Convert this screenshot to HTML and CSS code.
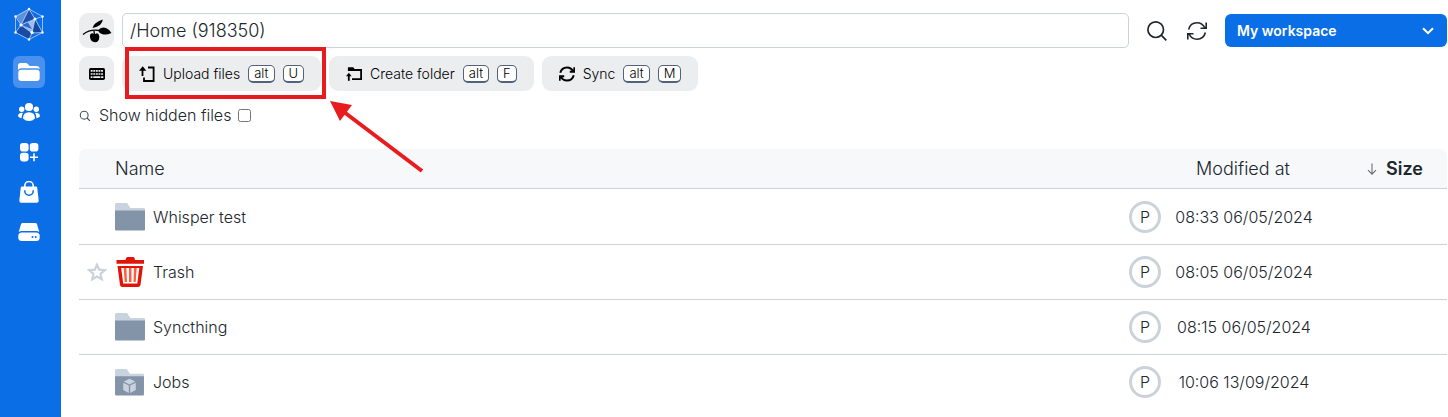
FILE: index.html
```html
<!DOCTYPE html>
<html lang="en">
<head>
<meta charset="utf-8">
<title>Files</title>
<meta name="viewport" content="width=device-width, initial-scale=1">
<link rel="stylesheet" href="styles.css">
</head>
<body>
<svg class="defs" aria-hidden="true">
  <symbol id="folder" viewBox="0 0 30 28">
    <path fill="#c9d3df" d="M0 1.5Q0 0 1.500 0H12L15.500 5H29Q30 5 30 6V12H0Z"/>
    <path fill="#8393a8" d="M0 7.500H30V26.500Q30 27.500 29 27.500H1Q0 27.500 0 26.500Z"/>
  </symbol>
  <symbol id="cycle" viewBox="0 0 20 20">
    <path fill="none" stroke="currentColor" d="M1.600 8.500C2.700 4.200 6 1.800 10 1.800c3.500 0 6.400 1.900 7.900 5.200M18.400 11.500c-1.100 4.300-4.400 6.700-8.400 6.700-3.500 0-6.400-1.900-7.900-5.200M19.200 1.500V7.200H13.500M.8 18.500V12.800H6.500"/>
  </symbol>
</svg>
<div class="app">
  <nav class="sidebar" aria-label="Main">
    <a class="logo" href="#" aria-label="Home">
      <svg width="32" height="34" viewBox="0 0 32 34">
        <path fill="#1d50ad" d="M16 2 22 12 19 26 8 18Z"/>
        <path fill="#5d91dc" d="M16 2 8 18 3 9Z"/>
        <path fill="#17479d" d="M22 12 29 26 19 26Z"/>
        <path fill="#9dc0ee" d="M8 18 22 12 19 26Z"/>
        <path fill="#1a4aa4" d="M8 18 19 26 16 32 3 25Z"/>
        <path fill="#2c6ad0" d="M8 18 14 14 19 22Z"/>
        <path fill="none" stroke="#b9d4fa" stroke-width=".8" d="M16 2 29.500 9.500V25.500L16 32.500 2.500 25.500V9.500ZM16 2 22 12 29.500 9.500M22 12 29.500 25.500 19 26 16 32.500M8 18 2.500 9.500M8 18 2.500 25.500M8 18 16 2M8 18 22 12 19 26Z"/>
        <g fill="#fff"><circle cx="16" cy="2" r="1.200"/><circle cx="29.500" cy="9.500" r="1.200"/><circle cx="29.500" cy="25.500" r="1.200"/><circle cx="16" cy="32.500" r="1.200"/><circle cx="2.500" cy="25.500" r="1.200"/><circle cx="2.500" cy="9.500" r="1.200"/><circle cx="22" cy="12" r="1.500"/><circle cx="8" cy="18" r="1.600"/><circle cx="19" cy="25.500" r="1.600"/></g>
      </svg>
    </a>
    <a class="nav-item current" href="#" aria-label="Files">
      <svg width="22" height="20" viewBox="0 0 22 20" fill="#fff"><path d="M0 8V3.500Q0 1 2.500 1H7.500Q9 1 10 2.200L11.200 3.500Q11.600 4 12.500 4H18.500Q21.500 4 21.700 7Q20.500 6.300 19 6.300H3Q1.200 6.300 0 8Z"/><rect x=".3" y="7.700" width="21.400" height="11.300" rx="3"/></svg>
    </a>
    <a class="nav-item" href="#" aria-label="Projects">
      <svg width="22" height="20" viewBox="0 0 22 20" fill="#fff"><circle cx="11" cy="5" r="4.100"/><circle cx="3.700" cy="7.200" r="2.700"/><circle cx="18.300" cy="7.200" r="2.700"/><path d="M5 16.500Q5 10.300 11 10.300T17 16.500Q14.500 19 11 19T5 16.500ZM0 14.300Q0 10.800 4 10.800L5 11Q3.500 13 3.500 16.300Q1 16 0 14.300ZM22 14.300Q22 10.800 18 10.800L17 11Q18.500 13 18.500 16.300Q21 16 22 14.300Z"/></svg>
    </a>
    <a class="nav-item" href="#" aria-label="Resources">
      <svg width="20" height="20" viewBox="0 0 20 20" fill="#fff"><rect x="1" y="1" width="8.600" height="8.600" rx="2.800"/><rect x="10.800" y="1" width="8.600" height="8.600" rx="2.800"/><rect x="1" y="10.800" width="8.600" height="8.600" rx="2.800"/><path d="M14.200 11.200H15.800V14.400H19V16H15.800V19.200H14.200V16H11V14.400H14.200Z"/></svg>
    </a>
    <a class="nav-item" href="#" aria-label="Applications">
      <svg width="20" height="22" viewBox="0 0 20 22"><path fill="none" stroke="#fff" stroke-width="1.600" d="M5.800 7V4.700a4.200 4.200 0 0 1 8.400 0V7"/><path fill="#fff" d="M3 5.500H17Q18 5.500 18.200 6.600L19.700 19.500Q19.800 21.700 17.800 21.700H2.200Q.2 21.700 .3 19.500L1.800 6.600Q2 5.500 3 5.500Z"/><path fill="none" stroke="#0a6ee6" stroke-width="1.500" d="M5.800 9.200v.8a4.200 4.200 0 0 0 8.400 0v-.8"/></svg>
    </a>
    <a class="nav-item" href="#" aria-label="Runs">
      <svg width="22" height="20" viewBox="0 0 22 20" fill="#fff"><path d="M4.700 1H17.300Q18.600 1 19 2.200L21.300 10Q20 9 18.300 9H3.700Q2 9 .7 10L3 2.200Q3.400 1 4.700 1Z"/><rect x=".3" y="10.500" width="21.400" height="8.500" rx="3.500"/><circle cx="14.500" cy="15" r="1" fill="#0a6ee6"/><circle cx="17.700" cy="15" r="1" fill="#0a6ee6"/></svg>
    </a>
  </nav>
  <main class="main">
    <header class="topbar">
      <button class="square" type="button" aria-label="Drive">
        <svg width="30" height="26" viewBox="0 0 30 26"><path fill="none" stroke="#000" stroke-width="1.300" d="M1 16.500Q8 11 17 12.500M12 13 12.500 17"/><path d="M10.500 10Q11.500 4.500 20.800 1.500 20.500 8 10.500 10ZM16 12.500Q19 8.500 24 10 27.500 11.500 29.500 15 24 17.500 20 16 17 15 16 12.500ZM8 19Q7.500 15.500 10.500 15.300L12.500 16.300 15 15.300Q17.500 16 17.300 19.500 17 24 13 24.300 8.500 24 8 19Z"/></svg>
      </button>
      <input class="path" type="text" value="/Home (918350)" aria-label="Path">
      <div class="actions">
        <button class="plain" type="button" aria-label="Search">
          <svg width="20" height="20" viewBox="0 0 20 20" fill="none" stroke="#21262d" stroke-width="1.700"><circle cx="8.700" cy="8.700" r="7.800"/><path d="M14.200 14.200 19.300 19.400"/></svg>
        </button>
        <button class="plain" type="button" aria-label="Refresh"><svg class="refresh" width="20" height="20"><use href="#cycle"/></svg></button>
      </div>
      <div class="workspace">
        <select aria-label="Project"><option>My workspace</option></select>
        <svg class="chevron" width="12" height="8" viewBox="0 0 12 8" fill="none" stroke="#fff" stroke-width="2"><path d="M1 1.200 6 6.200 11 1.200"/></svg>
      </div>
    </header>
    <div class="toolbar">
      <button class="square" type="button" aria-label="Shortcuts">
        <svg width="16" height="12" viewBox="0 0 16 12"><rect width="16" height="12" rx="1.800"/><path fill="none" stroke="#ecedef" stroke-width="1.700" stroke-dasharray="1.900 .7" d="M1.700 2.800H14.300M1.700 6H14.300"/><path fill="none" stroke="#ecedef" stroke-width="1.700" d="M1.700 9.200H3.500M4.300 9.200H11.300M12.100 9.200H14.300"/></svg>
      </button>
      <div class="highlighted">
        <button class="tool" type="button">
          <svg width="16" height="16" viewBox="0 0 16 16"><path fill="none" stroke="#000" stroke-width="1.800" d="M9 1.500H14.600V15H5V11.500M3.500 10V3"/><path d="M0 4.800 3.700 .3 7.400 4.800Z"/></svg>
          Upload files <kbd>alt</kbd><kbd>U</kbd>
        </button>
        <span class="frame"></span>
        <svg class="pointer" width="94" height="72" viewBox="0 0 94 72"><path stroke="#e81c1e" stroke-width="4" d="M14 11 92 70"/><path fill="#e81c1e" d="M0 0 22 4 10 20Z"/></svg>
      </div>
      <button class="tool" type="button">
        <svg width="16" height="16" viewBox="0 0 16 16"><path fill="none" stroke="#000" stroke-width="1.800" d="M2.800 5V2.500H7L8.300 4H15.100V13.200H6"/><path fill="none" stroke="#000" stroke-width="1.800" d="M2.800 14.800V9"/><path d="M0 10.200 2.800 6.700 5.600 10.200Z"/><path d="M2 1.600H7L8.500 3.500V5H2Z"/></svg>
        Create folder <kbd>alt</kbd><kbd>F</kbd>
      </button>
      <button class="tool" type="button">
        <svg class="sync" width="16" height="16"><use href="#cycle"/></svg>
        Sync <kbd>alt</kbd><kbd>M</kbd>
      </button>
    </div>
    <div class="filter">
      <svg width="12" height="12" viewBox="0 0 12 12" fill="none" stroke="#4b5057" stroke-width="1.100"><circle cx="5.200" cy="6.200" r="3.900"/><path d="M8 9 11 12"/></svg>
      <label for="hidden">Show hidden files</label><input id="hidden" type="checkbox">
    </div>
    <table class="files">
      <thead>
        <tr><th class="name">Name</th><th class="modified">Modified at</th><th class="size"><span class="sort"><svg width="10" height="12" viewBox="0 0 10 12" fill="none" stroke="#6a6e74" stroke-width="1.100"><path d="M5 .5V11M1 7.200 5 11.200 9 7.200"/></svg>Size</span></th></tr>
      </thead>
      <tbody>
        <tr><td><div class="entry"><span class="star"></span><span class="icon"><svg width="30" height="28"><use href="#folder"/></svg></span>Whisper test</div></td><td><div class="date"><span class="owner">P</span><time>08:33 06/05/2024</time></div></td><td></td></tr>
        <tr><td><div class="entry"><span class="star"><svg width="20" height="20" viewBox="0 0 20 20" fill="none" stroke="#ccd2da" stroke-width="2.200"><path d="M10 2.700 12.200 7.700 17.700 8.200 13.500 11.900 14.800 17.300 10 14.500 5.200 17.300 6.500 11.900 2.300 8.200 7.800 7.700Z"/></svg></span><span class="icon"><svg width="30" height="30" viewBox="0 0 30 30"><path fill="#e11505" d="M1.500 3H10.500Q11 0 12.500 0H18.500Q19.500 0 20 3H29V6.800H1.500ZM2.500 9H28L25.500 28Q25 30 23 30H7.500Q5.300 30 5 28Z"/><path fill="#fff" d="M6.200 11H24.300L22.300 26.500H8.200Z"/><path fill="#ff5d43" d="M8.700 11H11.400L12 25H9.700ZM14 11H16.500V25H14ZM19 11H21.700L20.700 25H18.500Z"/></svg></span>Trash</div></td><td><div class="date"><span class="owner">P</span><time>08:05 06/05/2024</time></div></td><td></td></tr>
        <tr><td><div class="entry"><span class="star"></span><span class="icon"><svg width="30" height="28"><use href="#folder"/></svg></span>Syncthing</div></td><td><div class="date"><span class="owner">P</span><time>08:15 06/05/2024</time></div></td><td></td></tr>
        <tr><td><div class="entry"><span class="star"></span><span class="icon"><svg width="29" height="27" viewBox="0 0 30 28"><use href="#folder" width="30" height="28"/><path fill="#c9d3df" d="M15 10 21 13 15 16 9 13ZM8.500 14.200 14.300 17.200V25L8.500 21.800ZM21.500 14.200 15.700 17.200V25L21.500 21.800Z"/></svg></span>Jobs</div></td><td><div class="date"><span class="owner">P</span><time>10:06 13/09/2024</time></div></td><td></td></tr>
      </tbody>
    </table>
  </main>
</div>
</body>
</html>
```
FILE: styles.css
```css
* { box-sizing: border-box; }
body {
  margin: 0;
  background: #fff;
  color: #21262d;
  font: 300 16px/24px Inter, "Liberation Sans", sans-serif;
}
svg { display: block; flex: none; }
.defs { position: absolute; width: 0; height: 0; }
button, input, select { font: inherit; color: inherit; margin: 0; }
button { border: 0; padding: 0; cursor: pointer; }
.app { display: flex; min-height: 100vh; }
.sidebar {
  flex: none;
  width: 61px;
  padding: 7px 16px 0 13px;
  background: #0a6ee6;
  display: flex;
  flex-direction: column;
  gap: 8px;
}
.logo { display: flex; justify-content: center; margin-bottom: 7px; }
.nav-item {
  height: 32px;
  display: flex;
  align-items: center;
  justify-content: center;
  border-radius: 6px;
}
.current { background: #4991ec; }
.main {
  flex: 1;
  min-width: 0;
  padding: 13px 1px 0 18px;
}
.topbar { display: flex; align-items: center; gap: 8px; }
.square {
  flex: none;
  width: 35px;
  height: 35px;
  display: flex;
  align-items: center;
  justify-content: center;
  border-radius: 9px;
  background: #ecedef;
}
.path {
  flex: 1;
  min-width: 0;
  height: 35px;
  padding: 0 7px;
  border: 1px solid #ccd2da;
  border-radius: 5px;
  background: #fff;
  font-size: 18px;
}
.actions { display: flex; gap: 20px; padding: 0 10px; }
.plain { background: none; }
.refresh { stroke-width: 1.6; }
.sync { stroke-width: 2.5; }
.workspace { position: relative; width: 222px; }
.workspace select {
  appearance: none;
  display: block;
  width: 100%;
  height: 33px;
  padding: 0 12px;
  border: 0;
  border-radius: 6px;
  background: #0a6ee6;
  color: #fff;
  font-size: 14px;
  font-weight: 600;
}
.chevron { position: absolute; right: 13px; top: 13px; pointer-events: none; }
.toolbar { display: flex; gap: 8px; margin-top: 8px; }
.tool {
  height: 35px;
  padding: 0 17px;
  display: flex;
  align-items: center;
  gap: 8px;
  border-radius: 9px;
  background: #ecedef;
  color: #000;
  font-size: 14px;
  white-space: nowrap;
}
kbd {
  padding: 0 5px;
  border: 1px solid #52627a;
  border-bottom-width: 2px;
  border-radius: 5px;
  background: #fff;
  font: 300 13px/15px Inter, "Liberation Sans", sans-serif;
}
.highlighted { position: relative; }
.frame {
  position: absolute;
  left: 3px;
  right: -5px;
  top: -9px;
  bottom: -8px;
  border: 4px solid #e81c1e;
  pointer-events: none;
}
.pointer { position: absolute; left: 208px; top: 45px; pointer-events: none; }
.filter { display: flex; align-items: center; margin-top: 12px; }
.filter label { padding: 0 7px 0 8px; }
.filter input { width: 13px; height: 13px; }
.files {
  width: 100%;
  margin-top: 22px;
  border-collapse: separate;
  border-spacing: 0;
  table-layout: fixed;
}
th, td { padding: 0; border-bottom: 1px solid #ccd2da; text-align: left; }
th { height: 40px; background: #f6f8fa; font-size: 18px; font-weight: 300; }
th:first-child { border-top-left-radius: 7px; }
th:last-child { border-top-right-radius: 7px; }
td { height: 55px; }
tbody tr:first-child td { height: 56px; }
tbody tr:last-child td { border-bottom-color: transparent; }
.name { padding-left: 36px; }
.modified { width: 238px; padding-right: 10px; text-align: center; }
.size { width: 80px; }
.sort { display: flex; align-items: center; gap: 9px; font-weight: 600; }
.entry { display: flex; align-items: center; }
.star { width: 36px; padding-left: 8px; }
.icon { width: 38px; }
.date { display: flex; align-items: center; }
.date time { flex: 1; padding-right: 40px; text-align: center; }
.owner {
  width: 32px;
  height: 32px;
  display: flex;
  align-items: center;
  justify-content: center;
  border: 3px solid #ccd2da;
  border-radius: 50%;
}
```
